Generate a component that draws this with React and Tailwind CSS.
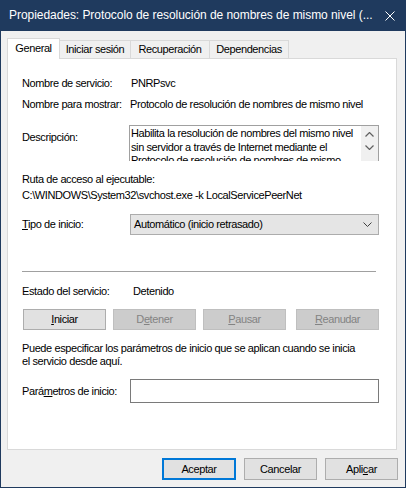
export default function App() {
  const btn =
    "h-[21px] flex items-center justify-center border border-[#adadad] bg-[#e1e1e1]";
  const dis =
    "h-[21px] flex items-center justify-center border border-[#bfbfbf] bg-[#cccccc] text-[#838383]";
  return (
    <div className="w-[406px] h-[488px] flex flex-col bg-[#f0f0f0] font-['Liberation_Sans',Arial,sans-serif] text-[11px] tracking-[-0.4px] text-black leading-[13px]">
      <div className="h-[31px] shrink-0 bg-[#1f3a5e] flex items-center pl-[9px] text-white text-[12px] tracking-[-0.05px]">
        <span className="w-[368px] whitespace-nowrap overflow-hidden">
          Propiedades: Protocolo de resolución de nombres de mismo nivel (...
        </span>
        <svg className="ml-[8px]" width="10" height="10" viewBox="0 0 10 10">
          <path d="M0.5 0.5 L9.5 9.5 M9.5 0.5 L0.5 9.5" stroke="#ffffff" strokeWidth="1" fill="none" />
        </svg>
      </div>
      <div className="flex-1 border-x border-b border-[#1f3a5e] flex flex-col pl-[6px]">
        {/* tabs */}
        <div className="mt-[7px] h-[20px] flex items-end">
          <div className="relative z-10 -mb-px h-[21px] w-[53px] bg-white border-l border-t border-r border-[#d9d9d9] flex items-center justify-center pb-[1px]">
            General
          </div>
          <div className="h-[18px] w-[71px] border-t border-r border-[#d9d9d9] flex items-center justify-center">
            Iniciar sesión
          </div>
          <div className="h-[18px] w-[79px] border-t border-r border-[#d9d9d9] flex items-center justify-center">
            Recuperación
          </div>
          <div className="h-[18px] w-[79px] border-t border-r border-[#d9d9d9] flex items-center justify-center">
            Dependencias
          </div>
        </div>
        {/* panel */}
        <div className="w-[390px] h-[392px] bg-white border border-[#d9d9d9] flex flex-col pl-[14px]">
          <div className="mt-[18px] flex">
            <div className="w-[108px]">Nombre de servicio:</div>
            <div className="ml-[1px]">PNRPsvc</div>
          </div>
          <div className="mt-[8px] flex">
            <div className="w-[108px]">Nombre para mostrar:</div>
            <div>Protocolo de resolución de nombres de mismo nivel</div>
          </div>
          <div className="mt-[14px] flex items-start">
            <div className="w-[107px] mt-[6px]">Descripción:</div>
            <div className="w-[250px] h-[36px] border border-[#a0a0a0] border-b-0 flex overflow-hidden">
              <div className="flex-1 pl-[1px] pt-[1px] whitespace-nowrap overflow-hidden leading-[13.5px]">
                <div>Habilita la resolución de nombres del mismo nivel</div>
                <div>sin servidor a través de Internet mediante el</div>
                <div>Protocolo de resolución de nombres de mismo</div>
              </div>
              <div className="w-[17px] bg-[#f0f0f0] flex flex-col items-center pt-[6px] gap-[8px]">
                <svg width="9" height="5" viewBox="0 0 9 5">
                  <path d="M0.5 4.5 L4.5 0.5 L8.5 4.5" stroke="#606060" strokeWidth="1.2" fill="none" />
                </svg>
                <svg width="9" height="5" viewBox="0 0 9 5">
                  <path d="M0.5 0.5 L4.5 4.5 L8.5 0.5" stroke="#606060" strokeWidth="1.2" fill="none" />
                </svg>
              </div>
            </div>
          </div>
          <div className="mt-[12px]">Ruta de acceso al ejecutable:</div>
          <div className="mt-[3px] whitespace-nowrap">C:\WINDOWS\System32\svchost.exe -k LocalServicePeerNet</div>
          <div className="mt-[12px] flex items-center">
            <div className="w-[108px]">
              <span className="underline">T</span>ipo de inicio:
            </div>
            <div className="w-[249px] h-[21px] bg-[#e5e5e5] border border-[#acacac] flex items-center pl-[3px] pr-[6px]">
              <span className="flex-1">Automático (inicio retrasado)</span>
              <svg width="9" height="5" viewBox="0 0 9 5">
                <path d="M0.5 0.5 L4.5 4.5 L8.5 0.5" stroke="#404040" strokeWidth="1" fill="none" />
              </svg>
            </div>
          </div>
          <div className="mt-[36px] w-[354px] h-px bg-[#a0a0a0]" />
          <div className="mt-[13px] flex">
            <div className="w-[111px]">Estado del servicio:</div>
            <div>Detenido</div>
          </div>
          <div className="mt-[11px] flex ml-[1px]">
            <div className={btn + " w-[83px]"}>
              <span><span className="underline">I</span>niciar</span>
            </div>
            <div className={dis + " w-[83px] ml-[7px]"}>
              <span>D<span className="underline">e</span>tener</span>
            </div>
            <div className={dis + " w-[83px] ml-[7px]"}>
              <span><span className="underline">P</span>ausar</span>
            </div>
            <div className={dis + " w-[83px] ml-[10px]"}>
              <span><span className="underline">R</span>eanudar</span>
            </div>
          </div>
          <div className="mt-[12px]">
            <div>Puede especificar los parámetros de inicio que se aplican cuando se inicia</div>
            <div>el servicio desde aquí.</div>
          </div>
          <div className="mt-[11px] flex items-center">
            <div className="w-[108px]">
              Pará<span className="underline">m</span>etros de inicio:
            </div>
            <div className="w-[249px] h-[24px] border border-[#7a7a7a] bg-white" />
          </div>
        </div>
        {/* bottom buttons */}
        <div className="mt-[8px] w-[391px] flex justify-end gap-[8px]">
          <div className="h-[22px] w-[74px] flex items-center justify-center border-2 border-[#0078d7] bg-[#e1e1e1]">
            Aceptar
          </div>
          <div className="h-[22px] w-[73px] flex items-center justify-center border border-[#adadad] bg-[#e1e1e1]">
            Cancelar
          </div>
          <div className="h-[22px] w-[73px] flex items-center justify-center border border-[#adadad] bg-[#e1e1e1]">
            <span>Apli<span className="underline">c</span>ar</span>
          </div>
        </div>
      </div>
    </div>
  );
}
